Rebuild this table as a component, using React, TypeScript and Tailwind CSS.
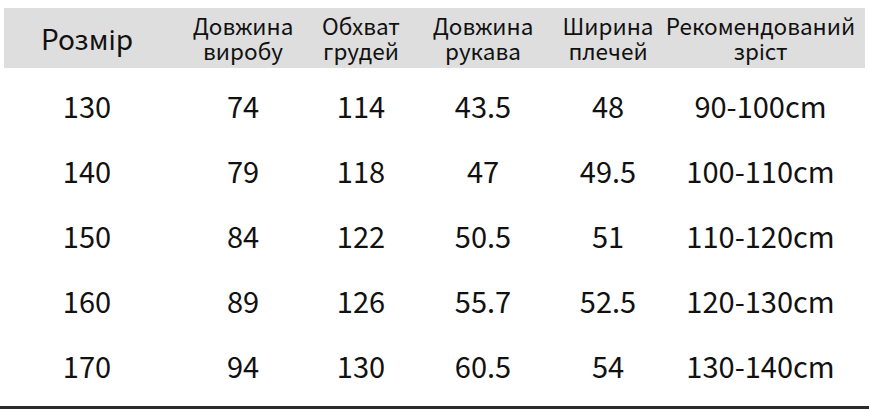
const headers = [
  ["Розмір"],
  ["Довжина", "виробу"],
  ["Обхват", "грудей"],
  ["Довжина", "рукава"],
  ["Ширина", "плечей"],
  ["Рекомендований", "зріст"],
];

const rows = [
  ["130", "74", "114", "43.5", "48", "90-100cm"],
  ["140", "79", "118", "47", "49.5", "100-110cm"],
  ["150", "84", "122", "50.5", "51", "110-120cm"],
  ["160", "89", "126", "55.7", "52.5", "120-130cm"],
  ["170", "94", "130", "60.5", "54", "130-140cm"],
];

const cols = "grid grid-cols-[166px_146px_90px_154px_96px_209px]";

export default function App() {
  return (
    <div
      className="h-[409px] w-[869px] overflow-hidden bg-white text-[#111]"
      style={{ fontFamily: '"Noto Sans CJK SC", "Noto Sans", sans-serif' }}
    >
      <div className="pt-[8px]">
        <div className={`${cols} ml-[4px] h-[60px] w-[861px] items-center bg-[#dedede]`}>
          {headers.map((h, i) =>
            h.length === 1 ? (
              <div key={i} className="text-center text-[28px] leading-none">
                {h[0]}
              </div>
            ) : (
              <div key={i} className="whitespace-nowrap text-center text-[22.5px] leading-[25px]">
                <div>{h[0]}</div>
                <div>{h[1]}</div>
              </div>
            )
          )}
        </div>
      </div>

      <div className="ml-[4px] pt-[5px]">
        {rows.map((r, i) => (
          <div key={i} className={`${cols} h-[65px] items-center`}>
            {r.map((c, j) => (
              <div key={j} className="text-center text-[29px] leading-none">
                {c}
              </div>
            ))}
          </div>
        ))}
      </div>

      <div className="mt-[8px] h-[3px] w-full bg-[#2b2b2b]" />
    </div>
  );
}
